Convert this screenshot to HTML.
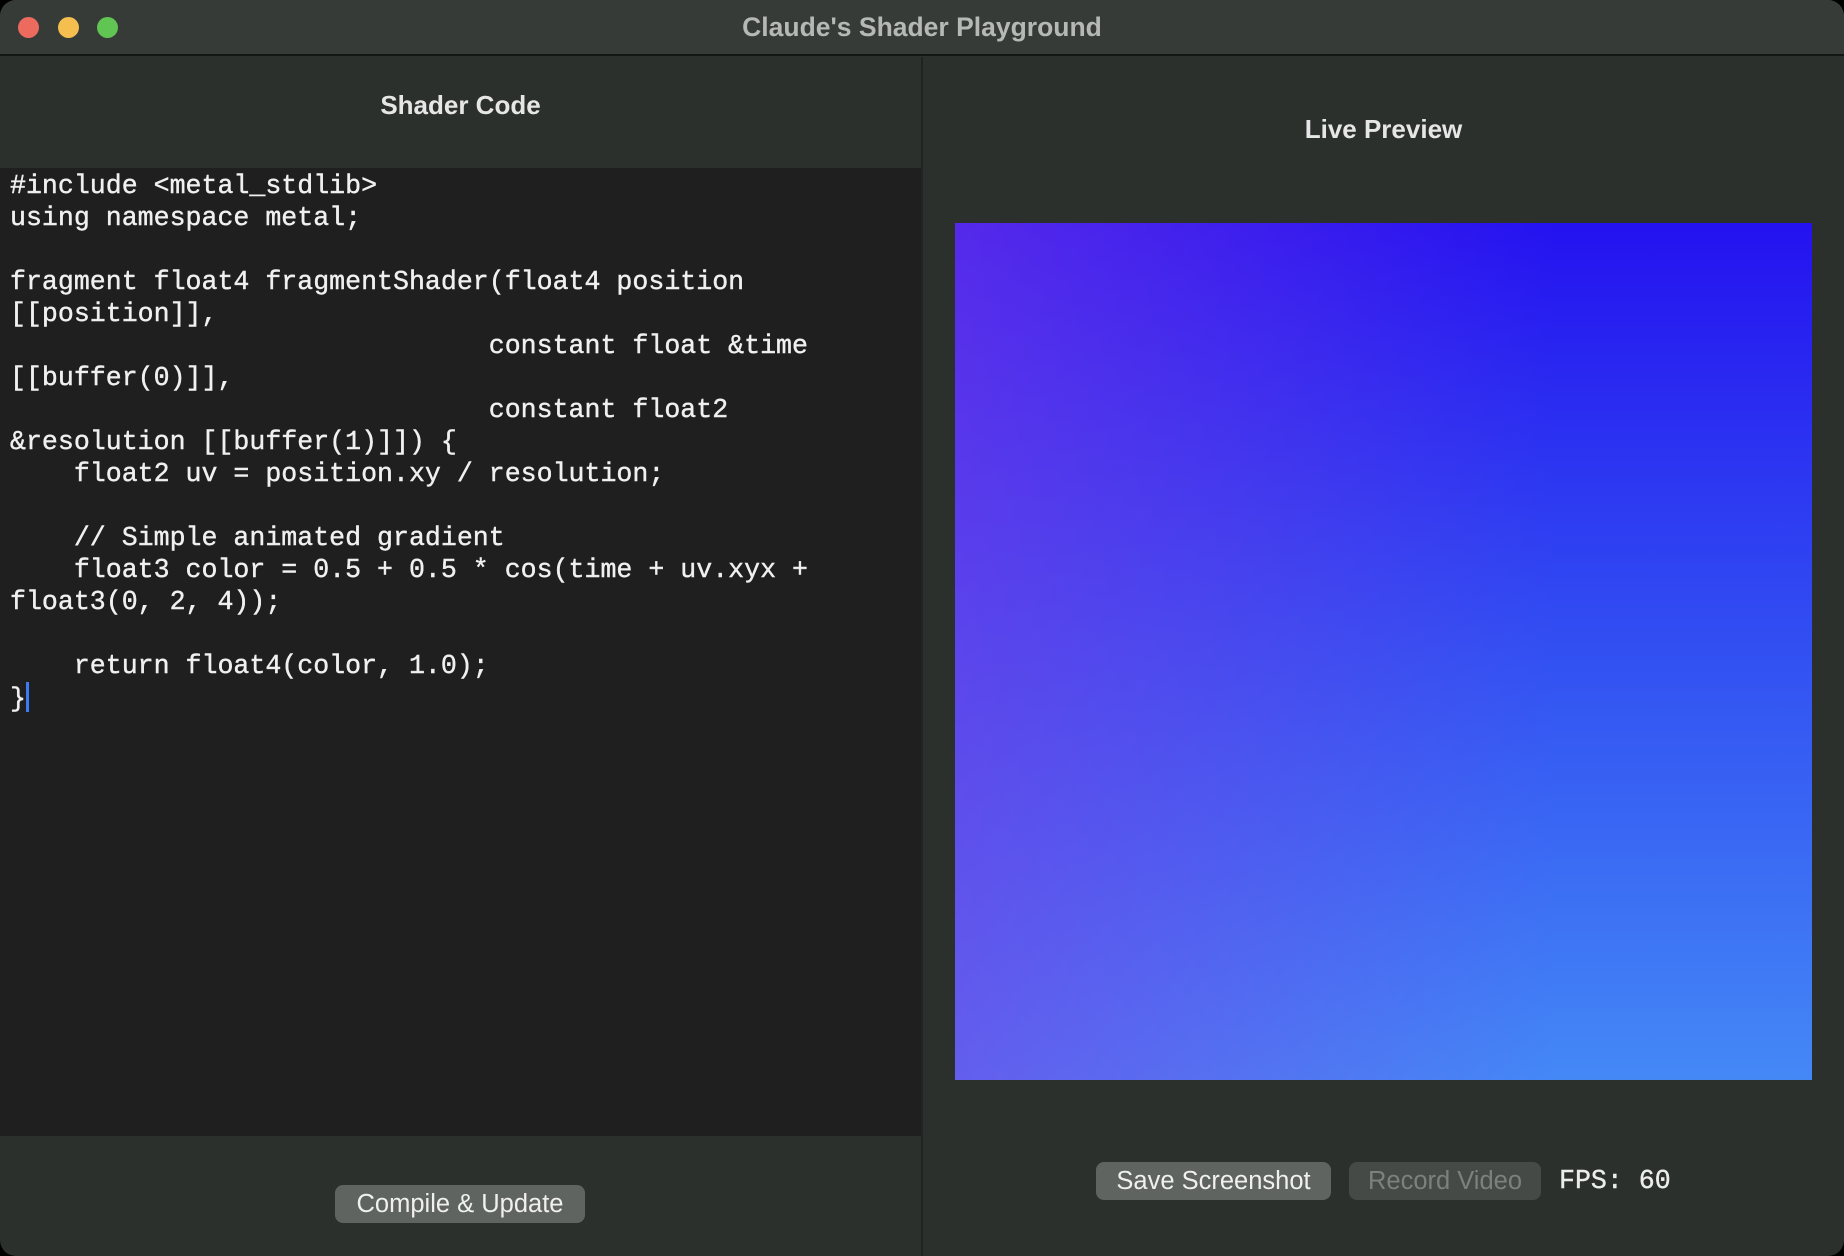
<!DOCTYPE html>
<html><head><style>
*{margin:0;padding:0;box-sizing:border-box}
html,body{width:1844px;height:1256px;background:#000;overflow:hidden}
.win{position:absolute;left:0;top:0;width:1844px;height:1256px;background:#2b302d;border-radius:16px;overflow:hidden;font-family:"Liberation Sans",sans-serif}
.tb{position:absolute;left:0;top:0;width:100%;height:56px;background:#373b38;border-bottom:2px solid #141614}
.dot{position:absolute;top:17px;width:21px;height:21px;border-radius:50%}
.title{position:absolute;left:0;right:0;top:12px;text-align:center;color:#b5b8b5;font-weight:bold;font-size:26.5px}
.divider{position:absolute;left:921px;top:57px;width:2px;height:1199px;background:#202321}
.h{position:absolute;color:#e6e6e6;font-weight:bold;font-size:26px;text-align:center}
.code{position:absolute;left:0;top:168px;width:921px;height:968px;background:#1f1f1f}
pre{position:absolute;left:10px;top:2px;font-family:"Liberation Mono",monospace;font-size:26.6px;line-height:32px;color:#f0f0f0;-webkit-text-stroke:0.4px #f0f0f0}
.cur{display:inline-block;width:3px;height:30px;background:#3b7cf6;vertical-align:-6px}
.btn{position:absolute;border-radius:8px;font-size:25.5px;text-align:center;line-height:38px}
.prev{position:absolute;left:955px;top:223px;width:857px;height:857px;
background:linear-gradient(to right,rgba(125,60,230,0.55),rgba(80,60,235,0) 70%),linear-gradient(to bottom,#2412f0 0%,#3250f2 50%,#4488f6 100%)}
</style></head><body>
<div class="win">
<div class="tb">
<div class="dot" style="left:18px;background:#ec6a5e"></div>
<div class="dot" style="left:58px;background:#f4bf4f"></div>
<div class="dot" style="left:97px;background:#61c554"></div>
<div class="title">Claude's Shader Playground</div>
</div>
<div class="divider"></div>
<div class="h" style="left:0;width:921px;top:90px">Shader Code</div>
<div class="h" style="left:923px;width:921px;top:114px">Live Preview</div>
<div class="code"><pre>#include &lt;metal_stdlib&gt;
using namespace metal;

fragment float4 fragmentShader(float4 position
[[position]],
                              constant float &amp;time
[[buffer(0)]],
                              constant float2
&amp;resolution [[buffer(1)]]) {
    float2 uv = position.xy / resolution;

    // Simple animated gradient
    float3 color = 0.5 + 0.5 * cos(time + uv.xyx +
float3(0, 2, 4));

    return float4(color, 1.0);
}<span class="cur"></span></pre></div>
<div class="btn" style="left:335px;top:1185px;width:250px;height:38px;background:#5f6460;color:#f0f0f0">Compile &amp; Update</div>
<div class="prev"></div>
<div class="btn" style="left:1096px;top:1162px;width:235px;height:38px;background:#5f6460;color:#f0f0f0">Save Screenshot</div>
<div class="btn" style="left:1349px;top:1162px;width:192px;height:38px;background:#454a46;color:#7d817d">Record Video</div>
<div style="position:absolute;left:1559px;top:1166px;font-family:'Liberation Mono',monospace;font-size:26.6px;color:#ececec;-webkit-text-stroke:0.4px #ececec">FPS: 60</div>
</div>
</body></html>
